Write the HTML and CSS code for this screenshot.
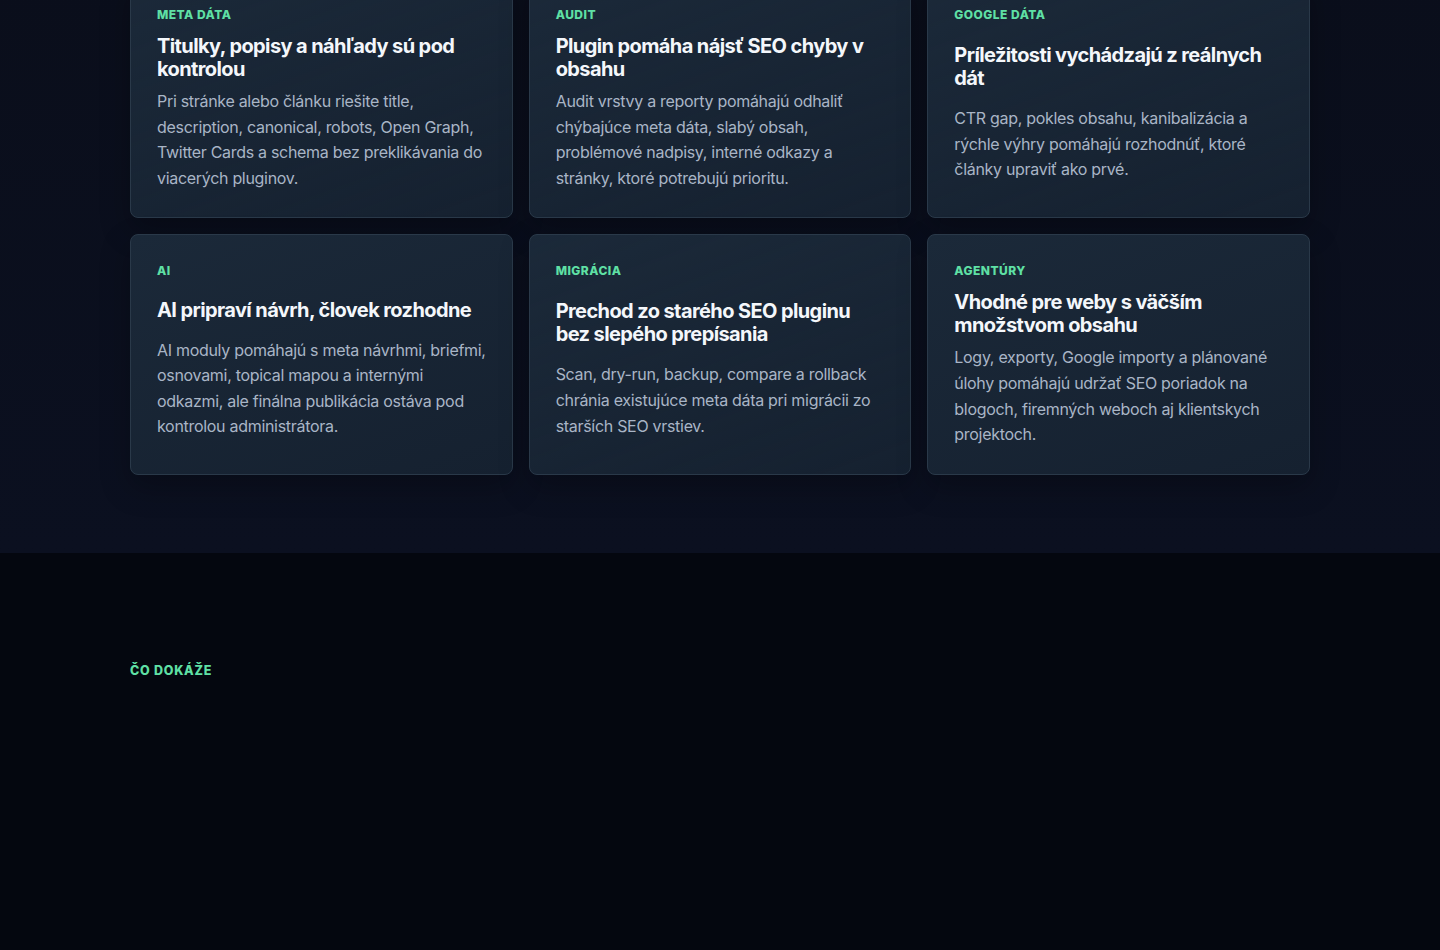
FILE: index.html
```html
<!DOCTYPE html>
<html lang="sk">
<head>
<meta charset="utf-8">
<title>SEO plugin</title>
<link rel="stylesheet" href="styles.css">
</head>
<body>
<section class="benefits">
  <div class="container grid">
    <article class="card">
      <span class="eyebrow">Meta dáta</span>
      <h3 class="card-title">Titulky, popisy a náhľady sú pod kontrolou</h3>
      <p class="card-text">Pri stránke alebo článku riešite title, description, canonical, robots, Open Graph, Twitter Cards a schema bez preklikávania do viacerých pluginov.</p>
    </article>
    <article class="card">
      <span class="eyebrow">Audit</span>
      <h3 class="card-title">Plugin pomáha nájsť SEO chyby v obsahu</h3>
      <p class="card-text">Audit vrstvy a reporty pomáhajú odhaliť chýbajúce meta dáta, slabý obsah, problémové nadpisy, interné odkazy a stránky, ktoré potrebujú prioritu.</p>
    </article>
    <article class="card">
      <span class="eyebrow">Google dáta</span>
      <h3 class="card-title">Príležitosti vychádzajú z reálnych dát</h3>
      <p class="card-text">CTR gap, pokles obsahu, kanibalizácia a rýchle výhry pomáhajú rozhodnúť, ktoré články upraviť ako prvé.</p>
    </article>
    <article class="card">
      <span class="eyebrow">AI</span>
      <h3 class="card-title">AI pripraví návrh, človek rozhodne</h3>
      <p class="card-text">AI moduly pomáhajú s meta návrhmi, briefmi, osnovami, topical mapou a internými odkazmi, ale finálna publikácia ostáva pod kontrolou administrátora.</p>
    </article>
    <article class="card">
      <span class="eyebrow">Migrácia</span>
      <h3 class="card-title">Prechod zo starého SEO pluginu bez slepého prepísania</h3>
      <p class="card-text">Scan, dry-run, backup, compare a rollback chránia existujúce meta dáta pri migrácii zo starších SEO vrstiev.</p>
    </article>
    <article class="card">
      <span class="eyebrow">Agentúry</span>
      <h3 class="card-title">Vhodné pre weby s väčším množstvom obsahu</h3>
      <p class="card-text">Logy, exporty, Google importy a plánované úlohy pomáhajú udržať SEO poriadok na blogoch, firemných weboch aj klientskych projektoch.</p>
    </article>
  </div>
</section>
<section class="capabilities">
  <div class="container">
    <span class="eyebrow eyebrow-lg">Čo dokáže</span>
  </div>
</section>
</body>
</html>
```
FILE: styles.css
```css
* { box-sizing: border-box; }
html, body { margin: 0; padding: 0; }
body {
  background: #04070f;
  font-family: Inter, "Noto Sans", "Liberation Sans", sans-serif;
  color: #f2f5f9;
  -webkit-font-smoothing: antialiased;
}
.container {
  max-width: 1180px;
  margin: 0 auto;
}
.benefits {
  background: linear-gradient(180deg, #0a0e1b 0%, #0b1020 100%);
  padding: 0 0 78px;
}
.grid {
  display: grid;
  grid-template-columns: repeat(3, 1fr);
  gap: 16px;
  margin-top: -22px;
}
.card {
  display: grid;
  align-content: stretch;
  padding: 26px;
  border: 1px solid #2a3949;
  border-radius: 8px;
  background: linear-gradient(160deg, #1b2939 0%, #17243390 100%), #131d2c;
  box-shadow: 0 12px 30px rgba(0, 0, 0, 0.25);
}
.eyebrow {
  display: block;
  color: #5fe0a5;
  font-size: 12px;
  line-height: 20px;
  font-weight: 800;
  letter-spacing: 0.04em;
  text-transform: uppercase;
  margin-bottom: 10px;
}
.card-title {
  margin: 0 0 8px;
  font-size: 20px;
  line-height: 23px;
  font-weight: 700;
  letter-spacing: -0.6px;
  color: #f4f7fb;
}
.card-text {
  margin: 0;
  font-size: 16px;
  line-height: 25.6px;
  letter-spacing: -0.3px;
  color: #a9b5c6;
}
.capabilities {
  background: #04070f;
  padding: 108px 0 260px;
}
.eyebrow-lg {
  font-size: 12.5px;
  line-height: 20px;
  letter-spacing: 0.06em;
  margin: 0;
}
```
